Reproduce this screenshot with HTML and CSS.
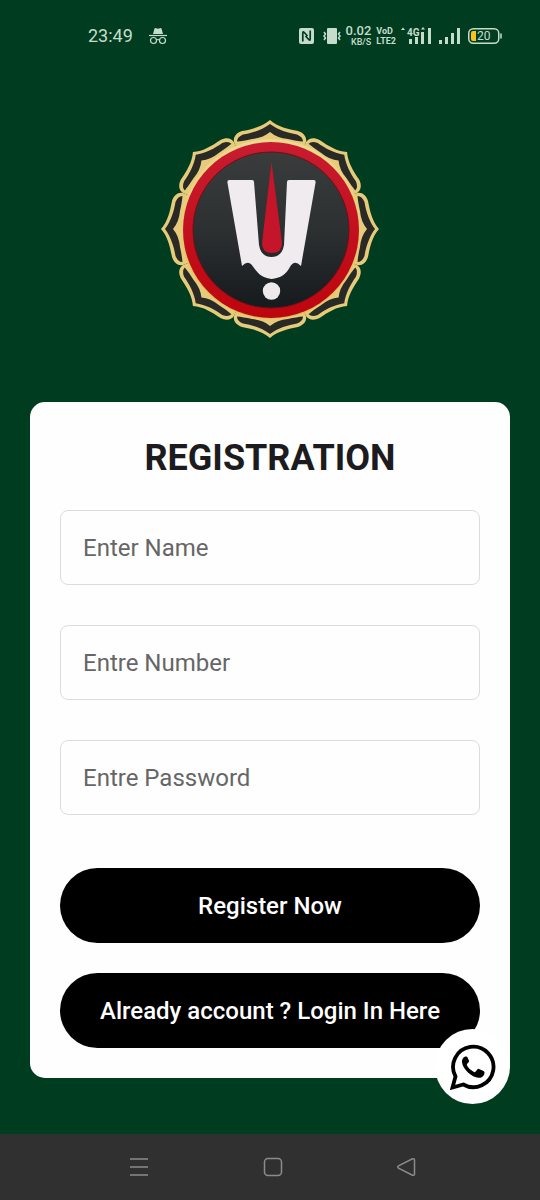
FILE: index.html
```html
<!DOCTYPE html>
<html lang="en">
<head>
<meta charset="utf-8">
<meta name="viewport" content="width=device-width, initial-scale=1">
<title>Registration</title>
<link rel="stylesheet" href="styles.css">
</head>
<body>
<header class="status">
  <div class="status-left">
    <time class="clock">23:49</time>
    <svg class="incognito" width="18" height="18" viewBox="0 0 18 18" aria-hidden="true">
      <path d="M4 7 5.500 1.500Q6 .8 7 1.300 9 2 11 1.300 12 .8 12.500 1.500L14 7Z" fill="currentColor"/>
      <path d="M0 8.500H18" stroke="currentColor" stroke-width="1.200"/>
      <g fill="none" stroke="currentColor" stroke-width="1.200"><circle cx="4.500" cy="13.500" r="3"/><circle cx="13.500" cy="13.500" r="3"/><path d="M7.500 13Q9 12 10.500 13"/></g>
    </svg>
  </div>
  <div class="status-right">
    <div class="status-group">
      <svg class="nfc" width="15" height="16" viewBox="0 0 15 16" aria-hidden="true">
        <rect width="15" height="16" rx="2" fill="currentColor"/>
        <path d="M3.800 13.500V5Q3.800 3 5.300 4.500L8.500 8M6.500 8 9.700 11.500Q11.200 13 11.200 11V2.500" fill="none" stroke="#003d20" stroke-width="1.700"/>
      </svg>
      <svg width="18" height="16" viewBox="0 0 18 16" aria-hidden="true">
        <rect x="4" width="10" height="16" rx="1" fill="currentColor"/>
        <path d="M1 4 2.500 6 1 8 2.500 10 1 12M17 4 15.500 6 17 8 15.500 10 17 12" fill="none" stroke="currentColor" stroke-width="1.500"/>
      </svg>
      <div class="speed"><span class="speed-value">0.02</span><span class="speed-unit">KB/S</span></div>
      <div class="volte"><span>VoD</span><span>LTE2</span></div>
    </div>
    <div class="status-group wide">
      <svg width="31" height="18" viewBox="0 0 31 18" role="img" aria-label="4G signal">
        <path d="M0 3 2 .5 4 3ZM20 2.500 22 0 24 2.500Z" fill="currentColor"/>
        <text class="network-text" x="6" y="9">4G</text>
        <path d="M8 12h3v5H8zM14 10h3v7h-3zM20 5h3v12h-3zM27 1h3v16h-3z" fill="currentColor"/>
      </svg>
      <svg width="22" height="18" viewBox="0 0 22 18" aria-hidden="true">
        <path d="M0 13h3v4H0zM6 10h3v7H6zM12 6h3v11h-3zM18 1h3v16h-3z" fill="currentColor"/>
      </svg>
      <svg width="34" height="16" viewBox="0 0 34 16" role="img" aria-label="Battery 20 percent">
        <rect x=".75" y=".75" width="30" height="14.500" rx="4.500" fill="none" stroke="currentColor" stroke-width="1.500"/>
        <path d="M5 3h3v10H5Q3 13 3 11V5Q3 3 5 3Z" fill="#ffc21a"/>
        <path d="M33 5.500v5" stroke="currentColor" stroke-width="1.500"/>
        <text class="battery-text" x="9" y="12">20</text>
      </svg>
    </div>
  </div>
</header>

<main class="screen">
  <svg class="logo" viewBox="-110 -110 220 220" role="img" aria-label="Logo">
    <defs>
      <linearGradient id="gold" x1="0" y1="0" x2="0" y2="1"><stop offset="0" stop-color="#efd890"/><stop offset="1" stop-color="#dfbd5b"/></linearGradient>
      <linearGradient id="disc" x1="0" y1="0" x2="0" y2="1"><stop offset="0" stop-color="#3a3c3c"/><stop offset=".5" stop-color="#2c3031"/><stop offset="1" stop-color="#171a1d"/></linearGradient>
      <linearGradient id="ring" x1="0" y1="0" x2="0" y2="1"><stop offset="0" stop-color="#c91c30"/><stop offset="1" stop-color="#bd050d"/></linearGradient>
      <g id="petal">
        <path d="M-34 -82L-36 -87C-37 -92-34 -96-28 -98C-18 -100-8 -102 0 -109C8 -102 18 -100 28 -98C34 -96 37 -92 36 -87L34 -82Z" fill="#e6cb7b"/>
        <path d="M0 -105C-8 -99-18 -96-27 -94.500Q-33 -92-33 -87.500Q-27 -88-18 -90Q-7 -91 0 -97Q7 -91 18 -90Q27 -88 33 -87.500Q33 -92 27 -94.500C18 -96 8 -99 0 -105Z" fill="#292a26"/>
      </g>
    </defs>
    <use href="#petal"/>
    <use href="#petal" transform="rotate(45)"/>
    <use href="#petal" transform="rotate(90)"/>
    <use href="#petal" transform="rotate(135)"/>
    <use href="#petal" transform="rotate(180)"/>
    <use href="#petal" transform="rotate(225)"/>
    <use href="#petal" transform="rotate(270)"/>
    <use href="#petal" transform="rotate(315)"/>
    <circle cx="1" r="90" fill="url(#gold)"/>
    <circle cx="1" cy="1" r="88" fill="url(#ring)"/>
    <circle cx="1" cy="1" r="78" fill="url(#disc)" stroke="#691017" stroke-width="1"/>
    <path d="M-41 -49H-18Q-16 -49-16 -47L-11 16Q-9 28 1.500 28Q12 28 14 16L17 -47Q17 -49 19 -49H44Q46 -49 45.500 -46L31 37Q27 33 24 34C18 36 20 48 1.500 50C-15 48-15 36-21 34Q-24 33-28 37L-42.500 -46Q-43 -49-41 -49Z" fill="#efebef"/>
    <circle cx="1.500" cy="62" r="8.700" fill="#eeeaec"/>
    <path d="M1.500 -67L12 14Q12 24 2 24Q-8 24-8 14Z" fill="#c5152a"/>
  </svg>

  <form class="card">
    <h1 class="title">REGISTRATION</h1>
    <div class="fields">
      <input class="field" type="text" placeholder="Enter Name" aria-label="Enter Name">
      <input class="field" type="tel" placeholder="Entre Number" aria-label="Entre Number">
      <input class="field" type="password" placeholder="Entre Password" aria-label="Entre Password">
    </div>
    <div class="actions">
      <button class="button" type="submit">Register Now</button>
      <button class="button" type="button">Already account ? Login In Here</button>
    </div>
  </form>

  <button class="whatsapp" type="button" aria-label="WhatsApp">
    <svg width="46" height="46" viewBox="0 0 46 46" aria-hidden="true">
      <path d="M2.500 43.500 5.500 32.500A20.200 20.200 0 1 1 13.300 40.500Z" fill="none" stroke="#000" stroke-width="3.800"/>
      <path d="M15.800 12.500C14.500 12.300 11.800 14.500 12 18C12.500 25 22 33.500 28.500 33.800C32 34 34.500 31.500 34.500 28.500Q34.500 27.500 33.500 27L29 25Q28 24.500 27.300 25.500L25.500 27.800Q25 28.500 24 28Q19 25.500 16.900 21.300Q16.500 20.500 17.200 19.800L18.800 17.900Q19.300 17.300 18.900 16.400L17.300 12.900Q17 12.400 15.800 12.500Z"/>
    </svg>
  </button>
</main>

<nav class="navbar" aria-label="System">
  <button class="nav-button" type="button" aria-label="Recent apps"><svg width="20" height="20" viewBox="0 0 20 20"><path d="M1 2H19M1 10H19M1 18H19"/></svg></button>
  <button class="nav-button" type="button" aria-label="Home"><svg width="20" height="20" viewBox="0 0 20 20"><rect x="1.500" y="1.500" width="17" height="17" rx="3.500"/></svg></button>
  <button class="nav-button" type="button" aria-label="Back"><svg width="20" height="20" viewBox="0 0 20 20"><path d="M2.500 8.800 16.500 1.800Q18.500 1.200 18.500 3V17Q18.500 18.800 16.500 18.200L2.500 11.200Q1 10 2.500 8.800Z"/></svg></button>
</nav>
</body>
</html>
```
FILE: styles.css
```css
* { box-sizing: border-box; }

body {
  margin: 0;
  min-height: 100vh;
  display: flex;
  flex-direction: column;
  background: #003d20;
  font-family: Roboto, "Liberation Sans", sans-serif;
}

button { border: 0; cursor: pointer; font-family: inherit; }

.status {
  display: flex;
  align-items: center;
  justify-content: space-between;
  height: 72px;
  padding: 0 38px 0 88px;
  color: #c5dccb;
}

.status-left, .status-right, .status-group { display: flex; align-items: center; }
.status-left { gap: 16px; }
.status-right, .status-group { gap: 5px; }
.status-group.wide { gap: 7px; }
.clock { font-size: 18px; line-height: 24px; }
.nfc { margin-right: 4px; }

.speed, .volte {
  display: flex;
  flex-direction: column;
  align-items: flex-end;
  font-weight: 500;
}
.speed-value { font-size: 13px; line-height: 12px; }
.speed-unit { font-size: 9px; line-height: 10px; }
.volte { align-items: flex-start; font-size: 9px; line-height: 10px; font-weight: 700; }
.network-text { font-size: 10px; font-weight: 700; fill: currentColor; }
.battery-text { font-size: 12px; fill: currentColor; }

.screen {
  position: relative;
  flex: 1;
  display: flex;
  flex-direction: column;
  padding: 47px 30px 56px;
}

.logo {
  align-self: center;
  width: 220px;
  height: 220px;
}

.card {
  margin-top: 63px;
  padding: 36px 30px 30px;
  border-radius: 15px;
  background: #fefefe;
}

.title {
  margin: 0 0 32px;
  color: #1c1b20;
  font-size: 36px;
  line-height: 40px;
  font-weight: 700;
  text-align: center;
}

.fields { display: grid; gap: 40px; }

.field {
  width: 100%;
  height: 75px;
  padding: 0 22px;
  border: 1px solid #dcdcde;
  border-radius: 8px;
  background: #fefefe;
  color: #1c1b20;
  font-family: inherit;
  font-size: 24px;
}
.field::placeholder { color: #666; opacity: 1; }

.actions { display: grid; gap: 30px; margin-top: 53px; }

.button {
  height: 75px;
  padding: 0 20px;
  border-radius: 38px;
  background: #000;
  color: #fff;
  font-size: 24px;
  font-weight: 500;
}

.whatsapp {
  position: absolute;
  right: 30px;
  bottom: 30px;
  display: grid;
  place-items: center;
  width: 75px;
  height: 75px;
  padding: 0;
  border-radius: 50%;
  background: #fff;
}

.navbar {
  display: flex;
  align-items: center;
  justify-content: space-between;
  height: 66px;
  padding: 0 124px 0 129px;
  background: #303030;
}

.nav-button {
  display: grid;
  padding: 0;
  background: none;
}
.nav-button svg {
  fill: none;
  stroke: #8b8b8b;
  stroke-width: 1.5px;
}
```
